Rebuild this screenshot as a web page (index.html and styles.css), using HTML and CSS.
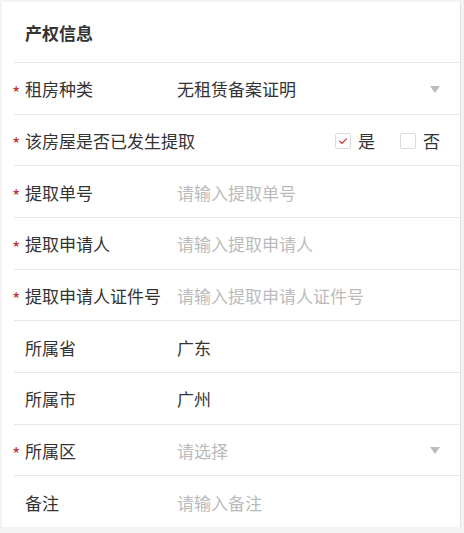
FILE: index.html
```html
<!DOCTYPE html>
<html lang="zh-CN">
<head>
<meta charset="utf-8">
<title>产权信息</title>
<link rel="stylesheet" href="styles.css">
</head>
<body>
<div class="card">
  <div class="title">产权信息</div>

  <div class="row">
    <span class="star">*</span>
    <span class="label">租房种类</span>
    <span class="value">无租赁备案证明</span>
    <span class="arrow"></span>
  </div>

  <div class="row">
    <span class="star">*</span>
    <span class="label wide">该房屋是否已发生提取</span>
    <span class="choices">
      <span class="choice">
        <span class="box checked">
          <svg viewBox="0 0 16 16" width="16" height="16"><path d="M4.2 8.2 L6.9 10.8 L11.8 5.6" fill="none" stroke="#c8343a" stroke-width="1.4" stroke-linecap="round" stroke-linejoin="round"/></svg>
        </span>
        <span class="choice-text">是</span>
      </span>
      <span class="choice">
        <span class="box"></span>
        <span class="choice-text">否</span>
      </span>
    </span>
  </div>

  <div class="row">
    <span class="star">*</span>
    <span class="label">提取单号</span>
    <span class="value placeholder">请输入提取单号</span>
  </div>

  <div class="row">
    <span class="star">*</span>
    <span class="label">提取申请人</span>
    <span class="value placeholder">请输入提取申请人</span>
  </div>

  <div class="row">
    <span class="star">*</span>
    <span class="label">提取申请人证件号</span>
    <span class="value placeholder">请输入提取申请人证件号</span>
  </div>

  <div class="row">
    <span class="star"></span>
    <span class="label">所属省</span>
    <span class="value">广东</span>
  </div>

  <div class="row">
    <span class="star"></span>
    <span class="label">所属市</span>
    <span class="value">广州</span>
  </div>

  <div class="row">
    <span class="star">*</span>
    <span class="label">所属区</span>
    <span class="value placeholder">请选择</span>
    <span class="arrow"></span>
  </div>

  <div class="row">
    <span class="star"></span>
    <span class="label">备注</span>
    <span class="value placeholder">请输入备注</span>
  </div>
</div>
</body>
</html>
```

FILE: styles.css
```css
* {
  box-sizing: border-box;
}

html, body {
  margin: 0;
  padding: 0;
}

body {
  background: #f3f3f3;
  padding: 2px 3px 6px 2px;
  font-family: "Noto Sans CJK SC", "Noto Sans", sans-serif;
  color: #333;
  width: 464px;
}

.card {
  background: #fff;
  border-right: 1px solid #e4e4e4;
}

.title {
  height: 60px;
  display: flex;
  align-items: center;
  padding-left: 23px;
  font-size: 17px;
  font-weight: bold;
  color: #333;
}

.row {
  margin-left: 12px;
  border-top: 1px solid #e8e8e8;
  height: 51.67px;
  display: flex;
  align-items: center;
  padding-right: 20px;
  font-size: 17px;
  padding-top: 1px;
}

.star {
  width: 13px;
  margin-left: -2px;
  flex: none;
  color: #c0343a;
  font-size: 18px;
  line-height: 1;
  padding-top: 6px;
  align-self: center;
}

.label {
  width: 152px;
  flex: none;
  white-space: nowrap;
  color: #333;
}

.label.wide {
  width: auto;
  flex: 1;
}

.value {
  flex: 1;
  white-space: nowrap;
  color: #333;
}

.placeholder {
  color: #bbb;
}

.arrow {
  width: 0;
  height: 0;
  border-left: 5.5px solid transparent;
  border-right: 5.5px solid transparent;
  border-top: 7px solid #bcbcbc;
  flex: none;
  margin-top: 1px;
}

.choices {
  display: flex;
  align-items: center;
  gap: 25px;
}

.choice {
  display: flex;
  align-items: center;
  gap: 7px;
}

.box {
  width: 16px;
  height: 16px;
  border: 1px solid #dcdcdc;
  border-radius: 2px;
  background: #fff;
  display: flex;
  align-items: center;
  justify-content: center;
  margin-top: 1px;
}

.box svg {
  display: block;
}
```
